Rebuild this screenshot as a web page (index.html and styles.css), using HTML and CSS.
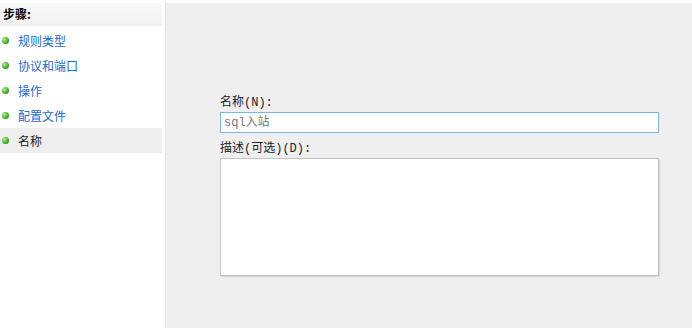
FILE: index.html
```html
<!DOCTYPE html>
<html lang="zh-CN">
<head>
    <meta charset="UTF-8">
    <title>名称</title>
    <link rel="stylesheet" href="styles.css">
</head>
<body>
    <div class="wizard">
        <!-- Left: steps -->
        <div class="steps">
            <div class="steps-title">步骤:</div>
            <ul class="step-list">
                <li class="step"><span class="dot"></span><span class="step-link">规则类型</span></li>
                <li class="step"><span class="dot"></span><span class="step-link">协议和端口</span></li>
                <li class="step"><span class="dot"></span><span class="step-link">操作</span></li>
                <li class="step"><span class="dot"></span><span class="step-link">配置文件</span></li>
                <li class="step current"><span class="dot"></span><span class="step-link">名称</span></li>
            </ul>
        </div>

        <div class="divider"></div>

        <!-- Right: form -->
        <div class="content">
            <label class="field-label" for="name">名称(N):</label>
            <input class="field-input" id="name" type="text" placeholder="sql入站">
            <label class="field-label" for="desc">描述(可选)(D):</label>
            <textarea class="field-area" id="desc"></textarea>
        </div>
    </div>
</body>
</html>
```

FILE: styles.css
```css
body {
    margin: 0;
    padding: 0;
    background-color: #fff;
    font-family: "Noto Sans CJK SC", sans-serif;
    font-size: 12px;
}

.wizard {
    display: flex;
    flex-direction: row;
    height: 328px;
    padding-top: 3px;
    box-sizing: border-box;
}

.steps {
    width: 162px;
    background-color: #fff;
}

.steps-title {
    height: 23px;
    line-height: 22px;
    padding-left: 3px;
    font-weight: bold;
    background: linear-gradient(to bottom, #fafafa, #f1f1f1);
}

.step-list {
    list-style: none;
    margin: 0;
    padding: 2px 0 0 0;
}

.step {
    display: flex;
    align-items: center;
    height: 25px;
}

.step.current {
    background-color: #eeeeee;
}

.dot {
    width: 7px;
    height: 7px;
    margin-left: 2px;
    margin-right: 9px;
    border-radius: 50%;
    background: radial-gradient(circle at 35% 35%, #b8f08a, #3fb02a 55%, #237a18);
}

.step-link {
    color: #1a6ad2;
}

.step.current .step-link {
    color: #222;
}

.divider {
    width: 3px;
    background-color: #fff;
    border-right: 1px solid #e4e4e4;
}

.content {
    flex: 1;
    background-color: #efefef;
    padding: 92px 33px 0 54px;
    display: flex;
    flex-direction: column;
    font-family: "Liberation Mono", "Noto Sans CJK SC", monospace;
}

.field-label {
    color: #222;
    height: 17px;
    line-height: 17px;
}

.field-input {
    height: 21px;
    box-sizing: border-box;
    margin: 0;
    padding: 0 3px;
    border: 1px solid #7db4ea;
    background-color: #fff;
    font-family: "Liberation Mono", "Noto Sans CJK SC", monospace;
    font-size: 12px;
    outline: none;
}

.field-input::placeholder {
    color: #777;
}

.field-input + .field-label {
    margin-top: 8px;
}

.field-area {
    height: 118px;
    box-sizing: border-box;
    margin: 0;
    border: 1px solid #c4c4c4;
    box-shadow: 1px 1px 1px #d8d8d8;
    background-color: #fff;
    resize: none;
    outline: none;
}
```
